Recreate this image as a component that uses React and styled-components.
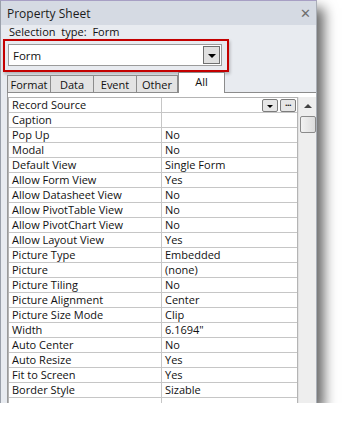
import React from "react";
import styled, { createGlobalStyle } from "styled-components";

const GlobalStyle = createGlobalStyle`
  body {
    margin: 0;
    background: #ffffff;
    font-family: "Open Sans", "Noto Sans", sans-serif;
  }
`;

const Panel = styled.div`
  width: 315px;
  height: 402px;
  border-top: 1px solid #a79fc4;
  border-left: 1px solid #9aa0aa;
  border-right: 1px solid #a9aeb6;
  background: #e8ebf0;
  box-shadow: 7px 8px 12px rgba(0, 0, 0, 0.6);
  display: flex;
  flex-direction: column;
  overflow: hidden;
  color: #111;
`;

const TitleBar = styled.div`
  height: 24px;
  background: #d5dae3;
  display: flex;
  align-items: center;
  justify-content: space-between;
  padding: 0 5px 0 6px;
  font-size: 12px;
  color: #1b1b1b;
`;

const Close = styled.span`
  font-family: "DejaVu Sans", sans-serif;
  font-weight: bold;
  font-size: 13px;
  color: #6e6e6e;
`;

const SelectionRow = styled.div`
  height: 13px;
  line-height: 13px;
  padding-left: 8px;
  font-size: 11px;
  word-spacing: 3px;
`;

const Highlight = styled.div`
  margin: 1px 0 0 2px;
  width: 214px;
  height: 26px;
  border: 2px solid #c40000;
  padding: 3px 5px 0 3px;
  box-shadow: 1px 2px 3px rgba(0, 0, 0, 0.25);
`;

const Combo = styled.div`
  height: 20px;
  background: #fff;
  border: 1px solid #9b9b9b;
  display: flex;
  align-items: center;
  justify-content: space-between;
  padding-left: 4px;
  font-size: 11.5px;
`;

const DropButton = styled.div`
  width: 15px;
  height: 16px;
  margin-right: 1px;
  background: #e0e0e0;
  border: 1px solid #6f6f6f;
  display: flex;
  align-items: center;
  justify-content: center;
`;

const Triangle = styled.span`
  width: 0;
  height: 0;
  border-left: ${(p) => p.size}px solid transparent;
  border-right: ${(p) => p.size}px solid transparent;
  border-top: ${(p) => p.size}px solid #000;
  margin-top: ${(p) => p.drop}px;
`;

const TabRow = styled.div`
  display: flex;
  align-items: flex-end;
  height: 21px;
  padding-left: 6px;
`;

const Tab = styled.div`
  height: ${(p) => (p.active ? 21 : 18)}px;
  width: ${(p) => p.w}px;
  box-sizing: border-box;
  border: 1px solid #8c8c8c;
  border-bottom: ${(p) => (p.active ? "none" : "1px solid #8c8c8c")};
  border-right: ${(p) => (p.active || p.last ? "1px solid #8c8c8c" : "none")};
  background: ${(p) => (p.active ? "#fff" : "#e3e3e3")};
  display: flex;
  align-items: center;
  justify-content: center;
  font-size: 11px;
  padding-bottom: ${(p) => (p.active ? 4 : 0)}px;
`;

const TabFill = styled.div`
  flex: 1;
  border-bottom: 1px solid #8c8c8c;
  align-self: stretch;
`;

const Page = styled.div`
  flex: 1;
  margin-left: 6px;
  border-left: 1px solid #9a9a9a;
  background: #fff;
  padding-top: 4px;
  display: flex;
  min-height: 0;
`;

const Grid = styled.div`
  width: 289px;
  border-top: 1px solid #b4b4b4;
  border-left: 1px solid #b4b4b4;
  border-right: 1px solid #b4b4b4;
  overflow: hidden;
`;

const Row = styled.div`
  display: grid;
  grid-template-columns: 153px 1fr;
  box-sizing: border-box;
  height: 15px;
  border-bottom: 1px solid #c6c6c6;
  font-size: 11px;
  line-height: 14px;
`;

const Label = styled.div`
  padding-left: 3px;
  border-right: 1px solid #c6c6c6;
  white-space: nowrap;
  overflow: hidden;
`;

const Value = styled.div`
  padding-left: 3px;
  display: flex;
  align-items: center;
  justify-content: ${(p) => (p.tools ? "flex-end" : "flex-start")};
  gap: 2px;
  padding-right: 1px;
`;

const MiniButton = styled.div`
  width: 14px;
  height: 11px;
  border: 1px solid #7c7c7c;
  border-radius: 2px;
  background: #e6e6e6;
  display: flex;
  align-items: center;
  justify-content: center;
  font-size: 9px;
  font-weight: bold;
  line-height: 6px;
  letter-spacing: -0.5px;
`;

const ScrollBar = styled.div`
  width: 17px;
  background: #eeeeee;
  border-left: 1px solid #e2e2e2;
  display: flex;
  flex-direction: column;
  align-items: center;
`;

const ArrowUp = styled.span`
  margin-top: 7px;
  width: 0;
  height: 0;
  border-left: 4px solid transparent;
  border-right: 4px solid transparent;
  border-bottom: 4px solid #444;
`;

const Thumb = styled.div`
  margin-top: 8px;
  width: 14px;
  height: 15px;
  border: 1px solid #8a8a8a;
  border-radius: 2px;
  background: linear-gradient(to right, #f2f2f2, #dcdcdc);
`;

const rows = [
  ["Record Source", null],
  ["Caption", ""],
  ["Pop Up", "No"],
  ["Modal", "No"],
  ["Default View", "Single Form"],
  ["Allow Form View", "Yes"],
  ["Allow Datasheet View", "No"],
  ["Allow PivotTable View", "No"],
  ["Allow PivotChart View", "No"],
  ["Allow Layout View", "Yes"],
  ["Picture Type", "Embedded"],
  ["Picture", "(none)"],
  ["Picture Tiling", "No"],
  ["Picture Alignment", "Center"],
  ["Picture Size Mode", "Clip"],
  ["Width", "6.1694\""],
  ["Auto Center", "No"],
  ["Auto Resize", "Yes"],
  ["Fit to Screen", "Yes"],
  ["Border Style", "Sizable"],
  ["", ""],
];

const tabs = [
  ["Format", 43],
  ["Data", 43],
  ["Event", 43],
  ["Other", 42, "last"],
];

export default function App() {
  return (
    <>
      <GlobalStyle />
      <Panel>
        <TitleBar>
          <span>Property Sheet</span>
          <Close>✕</Close>
        </TitleBar>
        <SelectionRow>Selection type: Form</SelectionRow>
        <Highlight>
          <Combo>
            <span>Form</span>
            <DropButton>
              <Triangle size={4} drop={1} />
            </DropButton>
          </Combo>
        </Highlight>
        <TabRow>
          {tabs.map(([name, w, last]) => (
            <Tab key={name} w={w} last={!!last}>
              {name}
            </Tab>
          ))}
          <Tab active w={47}>All</Tab>
          <TabFill />
        </TabRow>
        <Page>
          <Grid>
            {rows.map(([label, value], i) => (
              <Row key={i}>
                <Label>{label}</Label>
                {value === null ? (
                  <Value tools>
                    <MiniButton>
                      <Triangle size={3} drop={3} />
                    </MiniButton>
                    <MiniButton>···</MiniButton>
                  </Value>
                ) : (
                  <Value>{value}</Value>
                )}
              </Row>
            ))}
          </Grid>
          <ScrollBar>
            <ArrowUp />
            <Thumb />
          </ScrollBar>
        </Page>
      </Panel>
    </>
  );
}
